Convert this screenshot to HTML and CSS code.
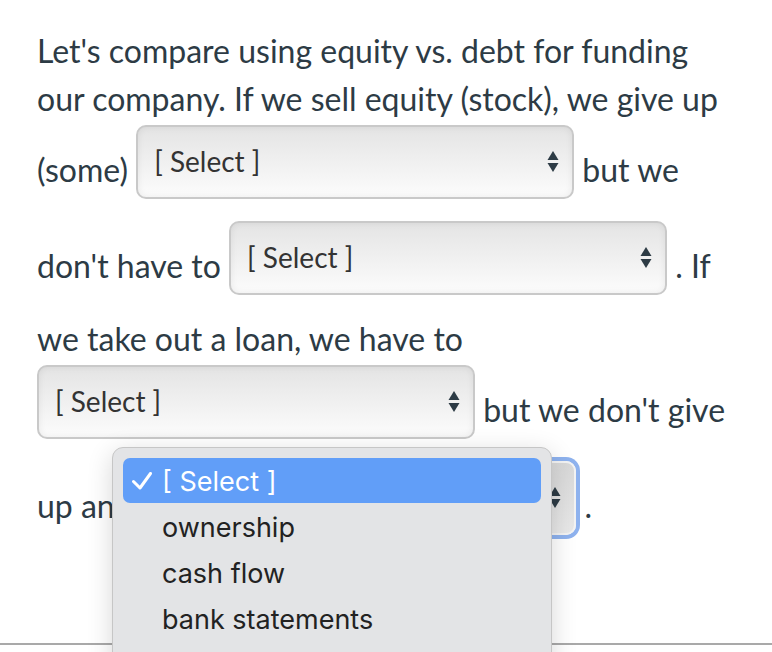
FILE: index.html
```html
<!DOCTYPE html>
<html lang="en">

<head>
    <meta charset="UTF-8">
    <title>Quiz Question</title>
    <link rel="stylesheet" href="styles.css">
</head>

<body>
    <div class="quiz">
        <p class="question">
            Let's compare using equity vs. debt for funding our company. If we sell equity (stock), we give up
            (some) <span class="select"><span class="select-text">[ Select ]</span><svg class="arrows" viewBox="0 0 12 24"><polygon points="6,1 11.5,10 0.5,10" /><polygon points="0.5,13 11.5,13 6,22" /></svg></span>
            but we don't have to <span class="select"><span class="select-text">[ Select ]</span><svg class="arrows" viewBox="0 0 12 24"><polygon points="6,1 11.5,10 0.5,10" /><polygon points="0.5,13 11.5,13 6,22" /></svg></span>
            . If we take out a loan, we have to <span class="select"><span class="select-text">[ Select ]</span><svg class="arrows" viewBox="0 0 12 24"><polygon points="6,1 11.5,10 0.5,10" /><polygon points="0.5,13 11.5,13 6,22" /></svg></span>
            but we don't give up any <span class="select focused"><span class="select-text">[ Select ]</span><svg class="arrows" viewBox="0 0 12 24"><polygon points="6,1 11.5,10 0.5,10" /><polygon points="0.5,13 11.5,13 6,22" /></svg></span>
            .
        </p>
    </div>
    <div class="divider"></div>

    <!-- open dropdown of the last select -->
    <ul class="dropdown">
        <li class="active"><svg class="check" viewBox="0 0 20 18"><polyline points="1.5,9.5 8,16 18.5,1.5" /></svg>[ Select ]</li>
        <li>ownership</li>
        <li>cash flow</li>
        <li>bank statements</li>
    </ul>
</body>

</html>
```

FILE: styles.css
```css
/* Reset */
body {
    margin: 0;
    padding: 0;
    background-color: #fff;
    font-family: Lato, "Open Sans", sans-serif;
    color: #2d3b45;
    overflow: hidden;
}

/* Question text */
.quiz {
    padding: 27px 39px 0 37px;
}

.question {
    margin: 0;
    font-size: 32px;
    line-height: 48px;
}

/* Select boxes */
.select {
    display: inline-flex;
    align-items: flex-start;
    justify-content: space-between;
    box-sizing: border-box;
    width: 438px;
    height: 74px;
    margin: 2px 0 20px;
    padding: 19px 13px 0 16px;
    vertical-align: 10px;
    border: 2px solid #c9c9c9;
    border-radius: 10px;
    background: linear-gradient(to bottom, #e4e4e4, #fcfcfc);
    box-shadow: inset 0 0 7px rgba(0, 0, 0, 0.07);
}

.select-text {
    font-size: 28px;
    line-height: 30px;
    color: #333;
}

.arrows {
    width: 12px;
    height: 24px;
    margin-top: 4px;
    fill: #2d3b45;
}

.select.focused {
    border-color: #f3f3f3;
    background: linear-gradient(to bottom, #d8d8d8, #e8e8e8);
    box-shadow: 0 0 0 4px #8eb2ee;
}

/* Bottom rule */
.divider {
    margin-top: 88px;
    border-top: 2px solid #a9a9a9;
}

/* Open dropdown menu */
.dropdown {
    position: absolute;
    top: 447px;
    left: 112px;
    width: 440px;
    height: 230px;
    box-sizing: border-box;
    margin: 0;
    padding: 10px 10px;
    list-style: none;
    background-color: #e3e4e6;
    border: 1px solid #c6c6c6;
    border-radius: 11px;
    box-shadow: 0 6px 26px rgba(0, 0, 0, 0.16);
    font-family: Inter, "Noto Sans", sans-serif;
    font-size: 27px;
    color: #222;
}

.dropdown li {
    height: 46px;
    line-height: 50px;
    padding-left: 39px;
    border-radius: 7px;
    position: relative;
}

.dropdown li.active {
    height: 45px;
    line-height: 48px;
    background-color: #619ef8;
    color: #fff;
}

.check {
    position: absolute;
    left: 9px;
    top: 14px;
    width: 20px;
    height: 18px;
    fill: none;
    stroke: #fff;
    stroke-width: 3;
    stroke-linecap: round;
    stroke-linejoin: round;
}
```
